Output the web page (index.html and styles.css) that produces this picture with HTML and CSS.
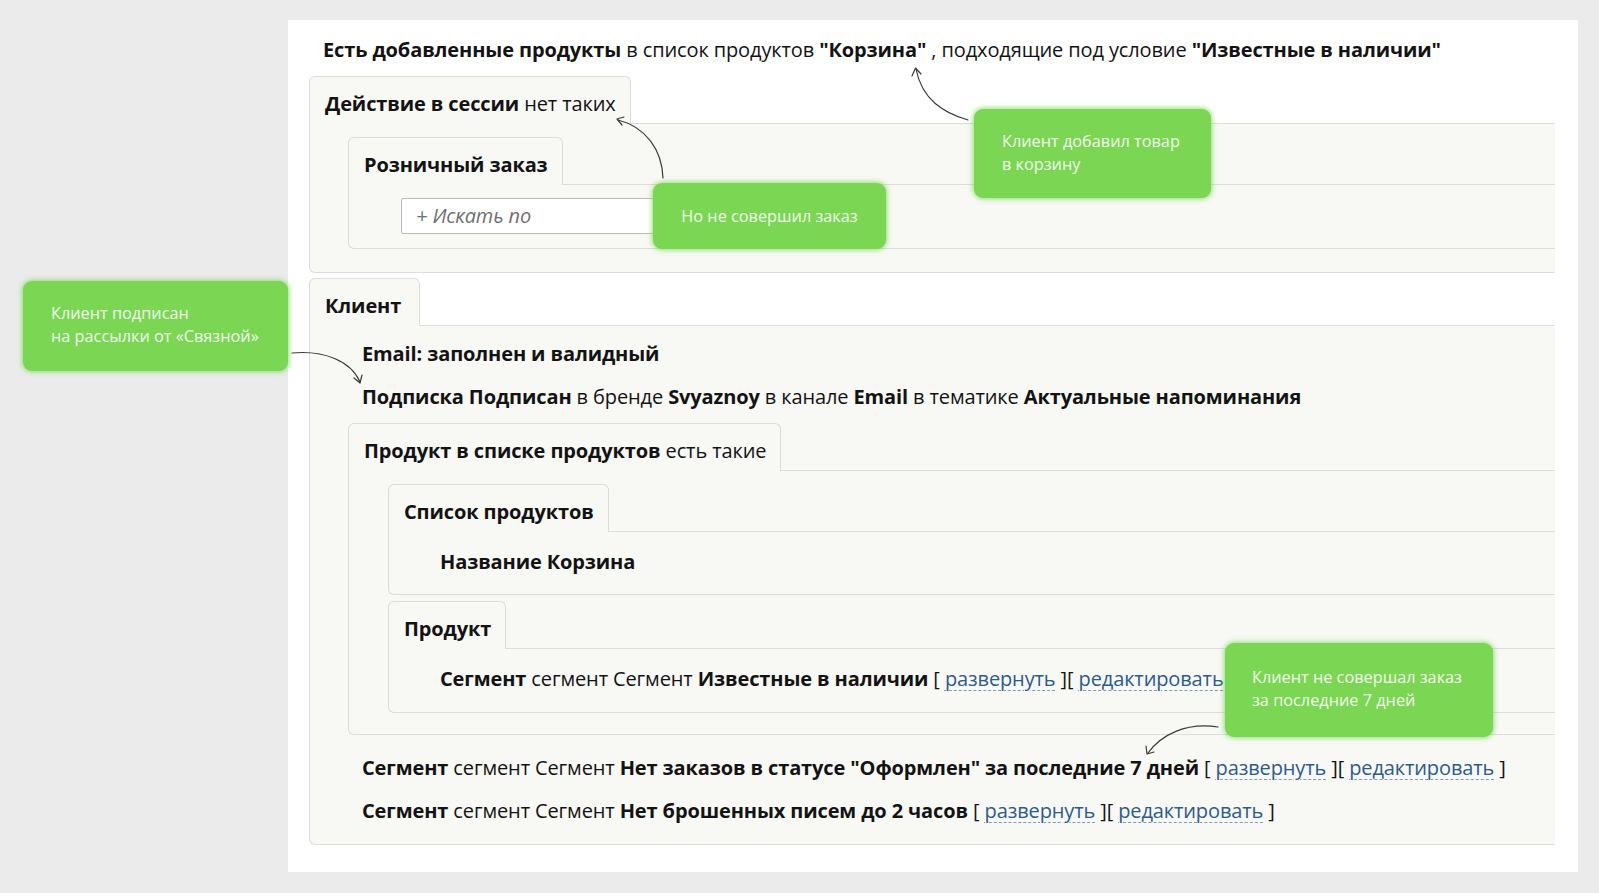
FILE: index.html
```html
<!DOCTYPE html>
<html lang="ru">
<head>
<meta charset="utf-8">
<title>Сегмент</title>
<link rel="stylesheet" href="styles.css">
</head>
<body>
<div class="page">
  <div class="panel">
    <div class="row head-line"><b>Есть добавленные продукты</b> в список продуктов <b>"Корзина"</b> , подходящие под условие <b>"Известные в наличии"</b></div>

    <div class="cond cond-session">
      <div class="cond-head"><div class="tab"><span><b>Действие в сессии</b> нет таких</span></div><div class="tab-fill"></div></div>
      <div class="cond-body body-session">
        <div class="cond">
          <div class="cond-head"><div class="tab"><span><b>Розничный заказ</b></span></div><div class="tab-fill"></div></div>
          <div class="cond-body body-order">
            <div class="search">+ Искать по</div>
          </div>
        </div>
      </div>
    </div>

    <div class="cond cond-client">
      <div class="cond-head"><div class="tab tab-client"><span><b>Клиент</b></span></div><div class="tab-fill"></div></div>
      <div class="cond-body body-client">
        <div class="row text-row"><b>Email: заполнен и валидный</b></div>
        <div class="row text-row"><b>Подписка Подписан</b> в бренде <b>Svyaznoy</b> в канале <b>Email</b> в тематике <b>Актуальные напоминания</b></div>

        <div class="cond cond-products">
          <div class="cond-head"><div class="tab"><span><b>Продукт в списке продуктов</b> есть такие</span></div><div class="tab-fill"></div></div>
          <div class="cond-body body-products">
            <div class="cond">
              <div class="cond-head"><div class="tab"><span><b>Список продуктов</b></span></div><div class="tab-fill"></div></div>
              <div class="cond-body body-list">
                <div class="row"><b>Название Корзина</b></div>
              </div>
            </div>
            <div class="cond cond-product">
              <div class="cond-head"><div class="tab"><span><b>Продукт</b></span></div><div class="tab-fill"></div></div>
              <div class="cond-body body-list">
                <div class="row"><b>Сегмент</b> сегмент Сегмент <b>Известные в наличии</b> [ <a class="lnk" href="#">развернуть</a> ][ <a class="lnk" href="#">редактировать</a> ]</div>
              </div>
            </div>
          </div>
        </div>

        <div class="row text-row seg-first"><b>Сегмент</b> сегмент Сегмент <b>Нет заказов в статусе "Оформлен" за последние 7 дней</b> [ <a class="lnk" href="#">развернуть</a> ][ <a class="lnk" href="#">редактировать</a> ]</div>
        <div class="row text-row seg-second"><b>Сегмент</b> сегмент Сегмент <b>Нет брошенных писем до 2 часов</b> [ <a class="lnk" href="#">развернуть</a> ][ <a class="lnk" href="#">редактировать</a> ]</div>
      </div>
    </div>
  </div>

  <svg class="arrows" width="1599" height="893" viewBox="0 0 1599 893" xmlns="http://www.w3.org/2000/svg">
    <g fill="none" stroke="#3a3a3a" stroke-width="1.2" stroke-linecap="round" stroke-linejoin="round">
      <path d="M968 120 C944 113 922 100 916 69"/>
      <path d="M912 76 L915.5 68 L921 74"/>
      <path d="M663 178 C662 150 646 127 618 120"/>
      <path d="M622 125 L617 119 L624 117"/>
      <path d="M292 353 C324 350 351 361 360 382"/>
      <path d="M354 378 L360 383 L362 375"/>
      <path d="M1218 727 C1186 722 1161 735 1148 753"/>
      <path d="M1146 746 L1147 754 L1154 752"/>
    </g>
  </svg>

  <div class="bubble bubble-cart">Клиент добавил товар<br>в корзину</div>
  <div class="bubble bubble-order">Но не совершил заказ</div>
  <div class="bubble bubble-sub">Клиент подписан<br>на рассылки от «Связной»</div>
  <div class="bubble bubble-days">Клиент не совершал заказ<br>за последние 7 дней</div>
</div>
</body>
</html>
```

FILE: styles.css
```css
* { box-sizing: border-box; }

html, body {
  margin: 0;
  padding: 0;
}

body {
  background: #ebebeb;
  font-family: "Open Sans", Roboto, "Liberation Sans", sans-serif;
  font-size: 20px;
  letter-spacing: -0.12px;
  color: #131313;
}

.page {
  position: relative;
  width: 1599px;
  height: 893px;
  padding: 20px 0 0 288px;
}

.panel {
  width: 1290px;
  height: 852px;
  background: #fff;
  padding: 15px 23px 0 21px;
}

b { font-weight: 700; }

.row {
  height: 30px;
  line-height: 30px;
  white-space: nowrap;
}

.head-line {
  margin-left: 14px;
  margin-bottom: 11px;
}

/* condition blocks with a tab */
.cond-head {
  display: flex;
  height: 48px;
}

.tab {
  display: flex;
  align-items: center;
  padding: 5px 14px 0 15px;
  background: #f8f8f5;
  border: 1px solid #dcdcd8;
  border-bottom: none;
  border-radius: 6px 6px 0 0;
  white-space: nowrap;
}

.tab-client { padding-right: 18px; }

.tab-fill {
  flex: 1;
  border-bottom: 1px solid #dcdcd8;
}

.cond-body {
  background: #f8f8f5;
  border-left: 1px solid #dcdcd8;
  border-bottom: 1px solid #dcdcd8;
  border-radius: 0 0 0 6px;
}

.body-session { padding: 13px 0 23px 38px; }
.body-order { padding: 13px 0 14px 52px; }

.search {
  width: 300px;
  height: 36px;
  line-height: 34px;
  padding-left: 14px;
  background: #fff;
  border: 1px solid #b9b9b6;
  border-radius: 2px;
  font-style: italic;
  color: #6f6f6f;
}

.cond-client { margin-top: 5px; }

.body-client {
  display: flex;
  flex-direction: column;
  padding: 13px 0 18px 38px;
}

.text-row { margin-left: 14px; margin-bottom: 12px; }
.text-row + .text-row { margin-top: 1px; margin-bottom: 11px; }
.seg-first { margin-top: 18px; margin-bottom: 13px; }
.text-row + .seg-second { margin-top: 0; margin-bottom: 0; }

.body-products { padding: 13px 0 21px 39px; }
.body-list { padding: 15px 0 17px 51px; }
.cond-product { margin-top: 6px; }
.cond-product .body-list { padding-bottom: 18px; }

.lnk {
  color: #2c5b8c;
  text-decoration: underline dashed #7d9bbb;
  text-decoration-thickness: 1px;
  text-underline-offset: 4px;
}

/* overlays */
.arrows {
  position: absolute;
  left: 0;
  top: 0;
  pointer-events: none;
}

.bubble {
  position: absolute;
  background: #7ad653;
  color: #f2fbee;
  border-radius: 9px;
  box-shadow: 0 0 5px 1px rgba(110, 215, 70, 0.75);
  font-size: 16.3px;
  letter-spacing: 0;
  line-height: 23px;
  white-space: nowrap;
}

.bubble-cart {
  left: 974px;
  top: 109px;
  width: 237px;
  height: 89px;
  padding: 21px 0 0 28px;
}

.bubble-order {
  left: 653px;
  top: 183px;
  width: 233px;
  height: 66px;
  display: flex;
  align-items: center;
  justify-content: center;
}

.bubble-sub {
  left: 23px;
  top: 281px;
  width: 265px;
  height: 90px;
  padding: 21px 0 0 28px;
}

.bubble-days {
  left: 1225px;
  top: 643px;
  width: 268px;
  height: 94px;
  padding: 23px 0 0 27px;
}
```
